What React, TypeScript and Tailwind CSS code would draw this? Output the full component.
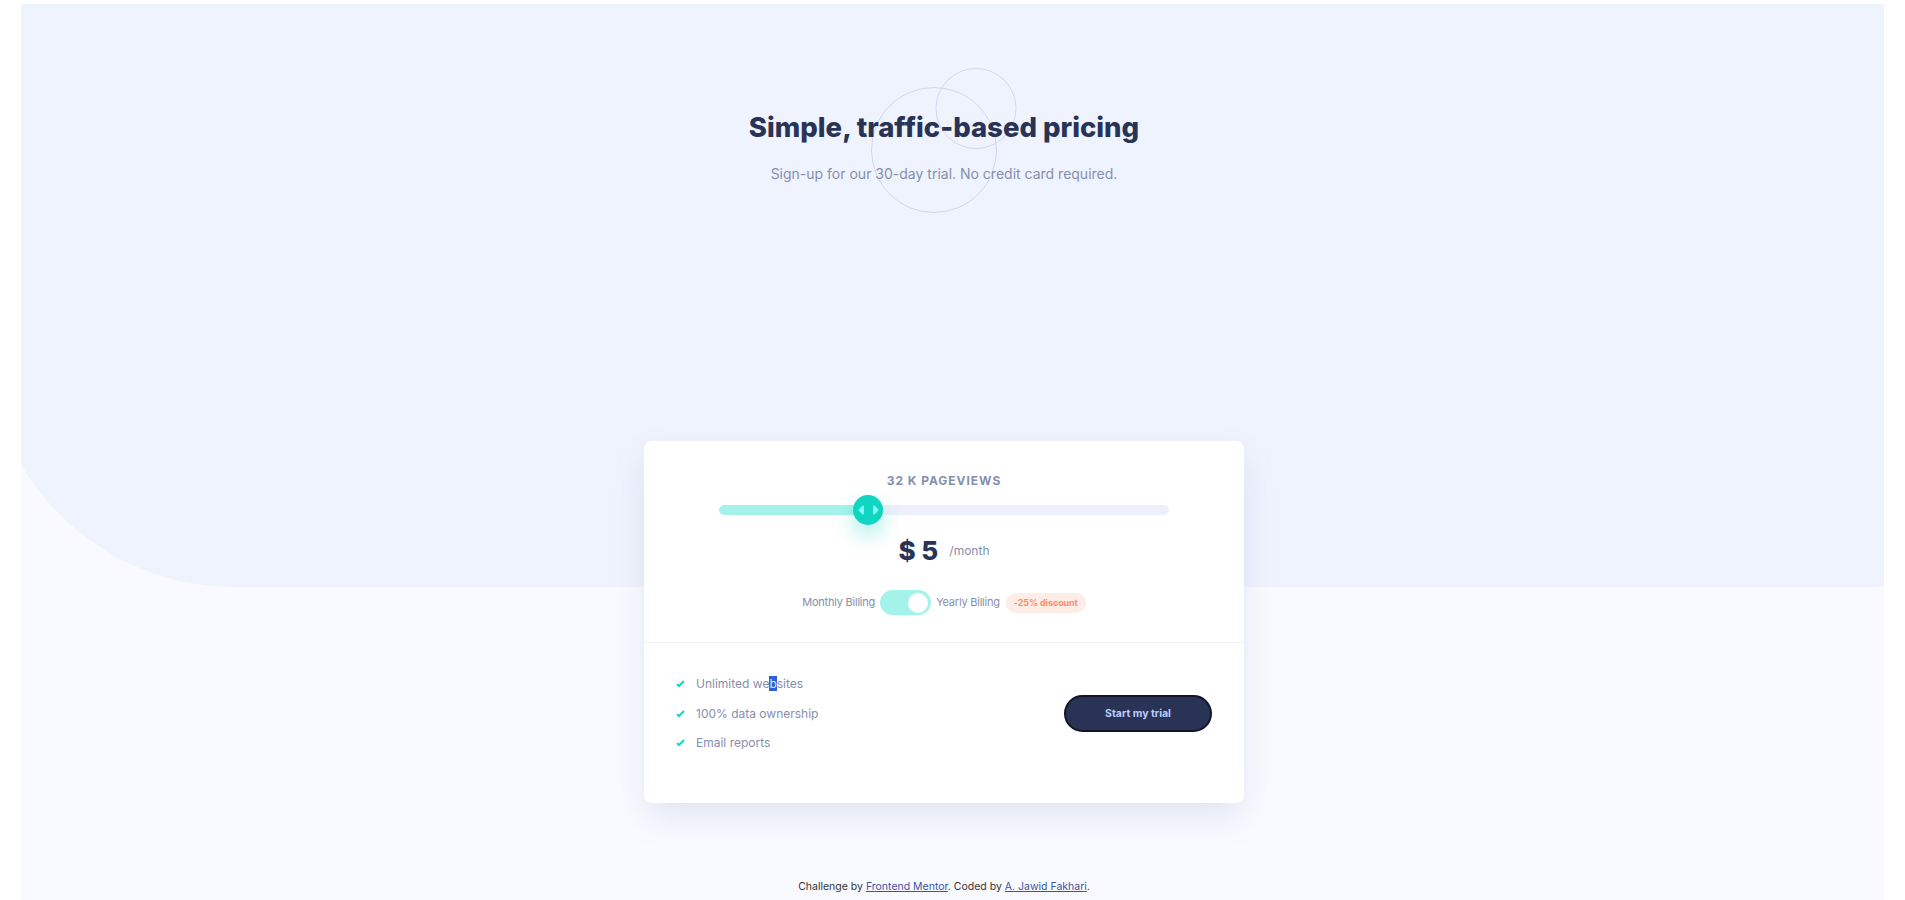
import { useState } from 'react'

const features = ['Unlimited websites', '100% data ownership', 'Email reports']

function CheckIcon() {
  return (
    <svg width="9" height="8" viewBox="0 0 9 8" className="shrink-0">
      <path fill="none" stroke="#10D8C4" strokeWidth="2" d="M1 4.134l1.907 1.908L7.949 1" />
    </svg>
  )
}

function SliderArrows() {
  return (
    <svg width="21" height="12" viewBox="0 0 22 13">
      <path
        fill="#80FFF3"
        d="M16 2.558v7.884a1 1 0 001.735.679l3.639-3.943a1 1 0 000-1.356l-3.64-3.943A1 1 0 0016 2.558zM6 2.558v7.884a1 1 0 01-1.735.679L.626 7.178a1 1 0 010-1.356l3.64-3.943A1 1 0 016 2.558z"
      />
    </svg>
  )
}

export default function App() {
  const [yearly, setYearly] = useState(true)
  const progress = 33.2

  return (
    <div className="min-h-screen bg-white font-['Inter',sans-serif]">
      <div className="relative mx-[21px] mt-[4px] bg-[#f9faff] overflow-hidden">
        {/* top background shape */}
        <svg
          className="absolute left-0 top-0 w-full h-[583px]"
          viewBox="0 0 1863 583"
          preserveAspectRatio="none"
          aria-hidden="true"
        >
          <path fill="#eff3fd" d="M0 0H1863V583H212C120 583 40 530 0 460Z" />
        </svg>

        <div className="relative flex flex-col items-center pr-[17px] pt-[106px] pb-[20px]">
          {/* header */}
          <header className="relative flex flex-col items-center">
            <svg
              className="absolute left-1/2 top-[-42px] ml-[-73px]"
              width="146"
              height="146"
              viewBox="0 0 146 146"
              aria-hidden="true"
            >
              <g fill="none" stroke="#cfd8ef">
                <circle cx="63" cy="82" r="62.5" />
                <circle cx="105" cy="40.5" r="40" />
              </g>
            </svg>
            <h1 className="relative text-[27.5px] leading-[34px] font-extrabold text-[#293356]">
              Simple, traffic-based pricing
            </h1>
            <p className="relative mt-[20px] text-[14px] leading-5 text-[#858fad]">
              Sign-up for our 30-day trial. No credit card required.
            </p>
          </header>

          {/* card */}
          <main className="mt-[257px] w-[600px] rounded-lg bg-white shadow-[0_15px_35px_-5px_rgba(127,137,185,0.22)]">
            <section className="flex flex-col items-center pt-8 pb-[27px]">
              <h2 className="text-xs leading-4 font-bold tracking-[0.08em] text-[#858fad]">32 K PAGEVIEWS</h2>

              <div className="relative mt-[6px] h-[30px] w-[450px] flex items-center">
                <div className="h-[10px] w-full rounded-full bg-[#ecf0fb] overflow-hidden">
                  <div className="h-full rounded-full bg-[#a4f3eb]" style={{ width: `${progress}%` }} />
                </div>
                <div
                  className="absolute top-0 -ml-[15px] flex h-[30px] w-[30px] items-center justify-center rounded-full bg-[#10d5c2] shadow-[0_10px_20px_rgba(16,213,194,0.35)]"
                  style={{ left: `${progress}%` }}
                >
                  <SliderArrows />
                </div>
              </div>

              <div className="mt-[10px] flex items-center gap-[11px]">
                <span className="text-[26px] leading-8 font-extrabold text-[#293356]">$ 5</span>
                <span className="text-xs leading-5 text-[#858fad]">/month</span>
              </div>

              <div className="mt-[23px] flex items-center text-[11px] tracking-[-0.02em] text-[#858fad]">
                <span>Monthly Billing</span>
                <button
                  type="button"
                  onClick={() => setYearly(!yearly)}
                  className="mx-[5px] flex h-[25px] w-[51px] items-center rounded-full bg-[#a4f3eb] px-[3px]"
                  aria-label="Toggle billing"
                >
                  <span className={`h-5 w-5 rounded-full bg-white ${yearly ? 'ml-auto' : ''}`} />
                </button>
                <span>Yearly Billing</span>
                <span className="ml-[6px] flex h-5 items-center rounded-full bg-[#feece7] px-2 text-[9px] font-bold tracking-[-0.01em] text-[#ff8c66]">
                  -25% discount
                </span>
              </div>
            </section>

            <section className="flex items-center justify-between border-t border-[#ecf0fb] px-8 pt-[31px] pb-[50px]">
              <ul className="flex flex-col gap-[9.5px]">
                {features.map((f) => (
                  <li key={f} className="flex items-center gap-[11px] text-xs leading-5 text-[#858fad]">
                    <CheckIcon />
                    {f === 'Unlimited websites' ? (
                      <span>
                        Unlimited we<span className="bg-[#2f5fd5] text-[#dfe6fb]">b</span>sites
                      </span>
                    ) : (
                      <span>{f}</span>
                    )}
                  </li>
                ))}
              </ul>
              <button
                type="button"
                className="h-[37px] w-[148px] rounded-full border-2 border-[#121525] bg-[#293356] text-[10.5px] font-bold text-[#bdccff]"
              >
                Start my trial
              </button>
            </section>
          </main>

          <footer className="mt-[76px] text-[10.5px] leading-4 text-[#333]">
            Challenge by{' '}
            <a href="#" className="text-[#3e52a3] underline">Frontend Mentor</a>. Coded by{' '}
            <a href="#" className="text-[#3e52a3] underline">A. Jawid Fakhari</a>.
          </footer>
        </div>
      </div>
    </div>
  )
}
